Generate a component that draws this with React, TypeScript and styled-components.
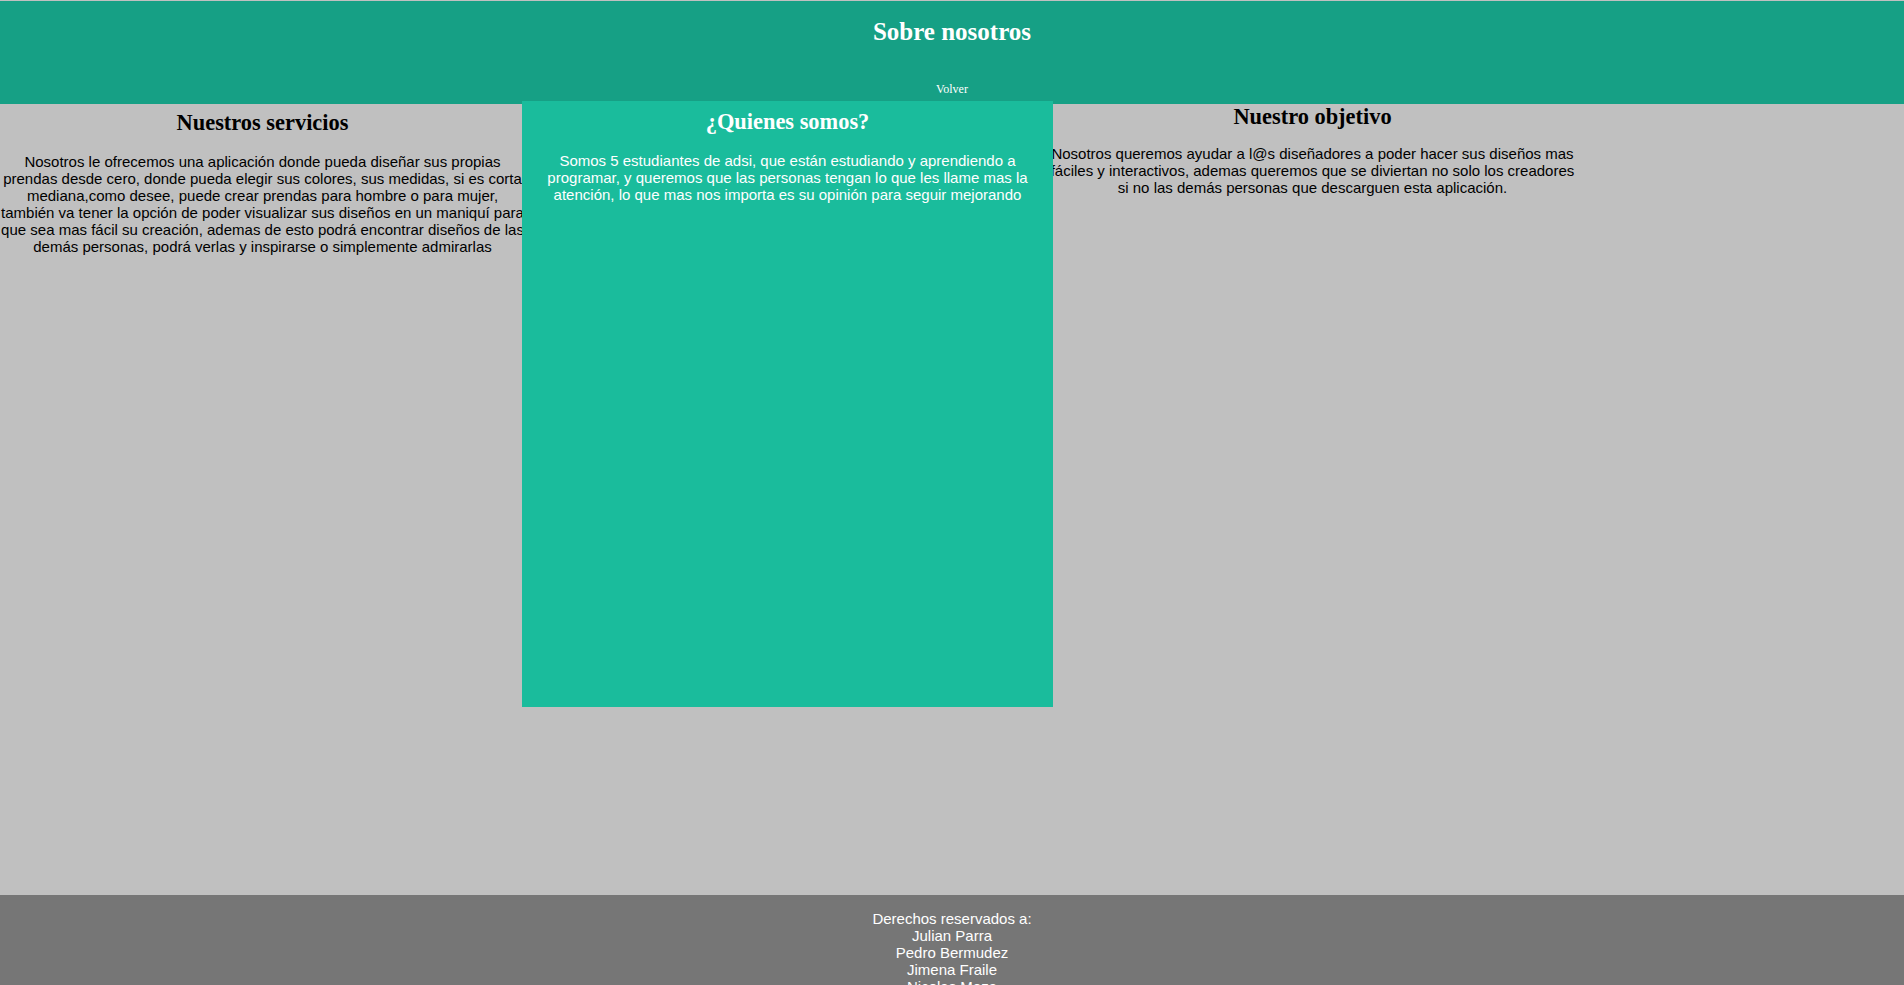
import styled, { createGlobalStyle } from "styled-components";

const GlobalStyle = createGlobalStyle`
  html, body {
    margin: 0;
    padding: 0;
    background-color: #c0c0c0;
  }
`;

interface ColumnProps {
  $top: number;
  $gap: number;
}

export default function App() {
  return (
    <>
      <GlobalStyle />
      <StyledHeader>
        <StyledTitle>Sobre nosotros</StyledTitle>
        <StyledBackLink href="#">Volver</StyledBackLink>
      </StyledHeader>
      <StyledMain>
        <StyledColumn $top={6} $gap={17}>
          <StyledColumnHeader>Nuestros servicios</StyledColumnHeader>
          <StyledColumnText>
            Nosotros le ofrecemos una aplicación donde pueda diseñar sus propias
            prendas desde cero, donde pueda elegir sus colores, sus medidas, si es
            corta mediana,como desee, puede crear prendas para hombre o para mujer,
            también va tener la opción de poder visualizar sus diseños en un maniquí
            para que sea mas fácil su creación, ademas de esto podrá encontrar
            diseños de las demás personas, podrá verlas y inspirarse o simplemente
            admirarlas
          </StyledColumnText>
        </StyledColumn>
        <StyledHighlightBox>
          <StyledHighlightHeader>¿Quienes somos?</StyledHighlightHeader>
          <StyledHighlightText>
            Somos 5 estudiantes de adsi, que están estudiando y aprendiendo a
            programar, y queremos que las personas tengan lo que les llame mas la
            atención, lo que mas nos importa es su opinión para seguir mejorando
          </StyledHighlightText>
        </StyledHighlightBox>
        <StyledColumn $top={0} $gap={15}>
          <StyledColumnHeader>Nuestro objetivo</StyledColumnHeader>
          <StyledColumnText>
            Nosotros queremos ayudar a l@s diseñadores a poder hacer sus diseños
            mas fáciles y interactivos, ademas queremos que se diviertan no solo
            los creadores si no las demás personas que descarguen esta aplicación.
          </StyledColumnText>
        </StyledColumn>
      </StyledMain>
      <StyledFooter>
        Derechos reservados a:
        <br />
        Julian Parra
        <br />
        Pedro Bermudez
        <br />
        Jimena Fraile
        <br />
        Nicolas Meza
      </StyledFooter>
    </>
  );
}

const StyledHeader = styled.header`
  display: flex;
  flex-direction: column;
  align-items: center;
  box-sizing: border-box;
  height: 103px;
  margin-top: 1px;
  padding-top: 17px;
  background-color: #16a085;
  font-family: "Liberation Serif", serif;
`;

const StyledTitle = styled.h2`
  margin: 0 0 36px;
  font-size: 25px;
  font-weight: bold;
  color: #fff;
`;

const StyledBackLink = styled.a`
  font-size: 12px;
  color: #fff;
  text-decoration: none;
`;

const StyledMain = styled.main`
  display: flex;
  flex-direction: row;
  align-items: flex-start;
  height: 791px;
  font-family: "Liberation Sans", Arial, sans-serif;
`;

const StyledColumn = styled.section<ColumnProps>`
  width: 525px;
  flex-shrink: 0;
  text-align: center;
  color: #000;

  h2 {
    margin-top: ${(p) => p.$top}px;
  }

  p {
    margin-top: ${(p) => p.$gap}px;
  }
`;

const StyledColumnHeader = styled.h2`
  margin: 0;
  font-family: "Liberation Serif", serif;
  font-size: 22.4px;
`;

const StyledColumnText = styled.p`
  margin: 0;
  font-size: 15px;
`;

const StyledHighlightBox = styled.section`
  position: relative;
  z-index: 1;
  box-sizing: border-box;
  width: 531px;
  height: 606px;
  flex-shrink: 0;
  margin: -3px -3px 0;
  padding: 8px 10px 0;
  background-color: #1abc9c;
  color: #fff;
  text-align: center;
`;

const StyledHighlightHeader = styled.h2`
  margin: 0;
  font-family: "Liberation Serif", serif;
  font-size: 22.4px;
`;

const StyledHighlightText = styled.p`
  margin: 17px 0 0;
  font-size: 15px;
`;

const StyledFooter = styled.footer`
  padding: 15px 0;
  background-color: #767676;
  color: #fff;
  text-align: center;
  font-family: "Liberation Sans", Arial, sans-serif;
  font-size: 15px;
`;
